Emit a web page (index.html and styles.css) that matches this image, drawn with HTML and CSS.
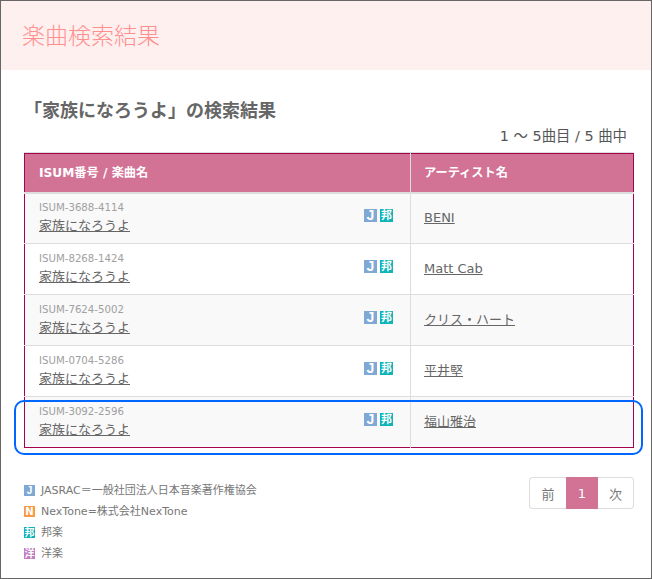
FILE: index.html
```html
<!DOCTYPE html>
<html lang="ja">
  <head>
    <meta charset="UTF-8" />
    <title>楽曲検索結果</title>
    <link rel="stylesheet" href="styles.css">
  </head>
  <body>
    <div class="frame">
      <header class="page-head">
        <h1>楽曲検索結果</h1>
      </header>
      <main class="content">
        <h2>「家族になろうよ」の検索結果</h2>
        <p class="count">1 ～ 5曲目 / 5 曲中</p>
        <div class="table-wrap">
          <table class="songs">
            <thead>
              <tr>
                <th class="col-song">ISUM番号 / 楽曲名</th>
                <th>アーティスト名</th>
              </tr>
            </thead>
            <tbody>
              <tr>
                <td class="col-song">
                  <div class="song-cell">
                    <div>
                      <div class="code">ISUM-3688-4114</div>
                      <a href="#">家族になろうよ</a>
                    </div>
                    <div class="marks"><span class="mark mark-j">J</span><span class="mark mark-ho">邦</span></div>
                  </div>
                </td>
                <td><a href="#">BENI</a></td>
              </tr>
              <tr>
                <td class="col-song">
                  <div class="song-cell">
                    <div>
                      <div class="code">ISUM-8268-1424</div>
                      <a href="#">家族になろうよ</a>
                    </div>
                    <div class="marks"><span class="mark mark-j">J</span><span class="mark mark-ho">邦</span></div>
                  </div>
                </td>
                <td><a href="#">Matt Cab</a></td>
              </tr>
              <tr>
                <td class="col-song">
                  <div class="song-cell">
                    <div>
                      <div class="code">ISUM-7624-5002</div>
                      <a href="#">家族になろうよ</a>
                    </div>
                    <div class="marks"><span class="mark mark-j">J</span><span class="mark mark-ho">邦</span></div>
                  </div>
                </td>
                <td><a href="#">クリス・ハート</a></td>
              </tr>
              <tr>
                <td class="col-song">
                  <div class="song-cell">
                    <div>
                      <div class="code">ISUM-0704-5286</div>
                      <a href="#">家族になろうよ</a>
                    </div>
                    <div class="marks"><span class="mark mark-j">J</span><span class="mark mark-ho">邦</span></div>
                  </div>
                </td>
                <td><a href="#">平井堅</a></td>
              </tr>
              <tr>
                <td class="col-song">
                  <div class="song-cell">
                    <div>
                      <div class="code">ISUM-3092-2596</div>
                      <a href="#">家族になろうよ</a>
                    </div>
                    <div class="marks"><span class="mark mark-j">J</span><span class="mark mark-ho">邦</span></div>
                  </div>
                </td>
                <td><a href="#">福山雅治</a></td>
              </tr>
            </tbody>
          </table>
          <!-- highlight round the last row -->
          <div class="ring"></div>
        </div>
        <div class="foot">
          <ul class="legend">
            <li><span class="mark-small mark-j">J</span>JASRAC＝一般社団法人日本音楽著作権協会</li>
            <li><span class="mark-small mark-n">N</span>NexTone=株式会社NexTone</li>
            <li><span class="mark-small mark-ho">邦</span>邦楽</li>
            <li><span class="mark-small mark-yo">洋</span>洋楽</li>
          </ul>
          <div class="pager">
            <span class="page-item page-prev">前</span>
            <span class="page-item page-on">1</span>
            <span class="page-item page-next">次</span>
          </div>
        </div>
      </main>
    </div>
  </body>
</html>
```

FILE: styles.css
```css
* {
  box-sizing: border-box;
}
html,
body {
  margin: 0;
  height: 100%;
}
body {
  font-family: "DejaVu Sans", "Noto Sans CJK JP", sans-serif;
  color: #666;
  background-color: #fff;
}
.frame {
  height: 579px;
  border: 1px solid #666;
  overflow: hidden;
}
.page-head {
  height: 69px;
  background-color: #fff0f0;
  padding: 0 21px 3px;
  display: flex;
  align-items: center;
}
.page-head h1 {
  margin: 0;
  font-size: 23px;
  font-weight: 300;
  color: #ff8f8f;
  font-family: "Noto Sans CJK JP", sans-serif;
}
.content {
  padding: 26px 17px 0 23px;
}
h2 {
  margin: 0;
  height: 26px;
  line-height: 26px;
  font-size: 18px;
  font-weight: bold;
  color: #666;
  font-family: "Noto Sans CJK JP", sans-serif;
}
.count {
  margin: 5px 7px 0 0;
  height: 25px;
  line-height: 18px;
  font-size: 14.4px;
  text-align: right;
  color: #555;
}
.table-wrap {
  position: relative;
  width: 610px;
  border-top: 1px solid #ddd;
}
.songs {
  width: 610px;
  border-collapse: collapse;
  table-layout: fixed;
  border: 1px solid #a5024f;
  font-size: 14px;
}
.songs th {
  height: 39px;
  padding: 0 0 2px 13px;
  background-color: #d27295;
  color: #fff;
  font-size: 12.2px;
  font-weight: bold;
  text-align: left;
  border-left: 1px solid #ddd;
  border-bottom: 2px solid #ddd;
}
.songs td {
  height: 51px;
  padding: 0 13px;
  border-left: 1px solid #ddd;
  border-bottom: 1px solid #ddd;
  background-color: #fff;
}
.songs tbody tr:nth-child(odd) td {
  background-color: #f9f9f9;
}
.songs tr:last-child td {
  border-bottom: none;
}
.songs .col-song {
  width: 386px;
  border-left: none;
  padding-left: 14px;
  padding-right: 13px;
}
.song-cell {
  display: flex;
  justify-content: space-between;
  align-items: center;
}
.code {
  font-size: 10.2px;
  line-height: 16px;
  color: #a0a0a0;
}
.songs a {
  color: #666;
  font-size: 13px;
  line-height: 20px;
}
.marks {
  display: flex;
  gap: 3px;
  margin-right: 4px;
  margin-bottom: 6px;
}
.mark {
  display: block;
  width: 13px;
  height: 13px;
  line-height: 13px;
  text-align: center;
  font-size: 11px;
  font-weight: bold;
  color: #fff;
}
.mark-j {
  background-color: #7fa9d4;
  font-family: "Liberation Sans", sans-serif;
}
.mark.mark-j {
  font-size: 14px;
}
.mark-ho {
  background-color: #0fb3b8;
}
.mark-n {
  background-color: #f79c45;
}
.mark-yo {
  background-color: #c27fc4;
}
.ring {
  position: absolute;
  left: -10px;
  bottom: -7px;
  width: 629px;
  height: 55px;
  border: 2px solid #0066ff;
  border-radius: 10px;
}
.foot {
  display: flex;
  justify-content: space-between;
  margin-top: 29px;
  width: 610px;
}
.legend {
  list-style: none;
  margin: 3px 0 0;
  padding: 0;
  font-size: 11px;
  color: #777;
}
.legend li {
  height: 21px;
  line-height: 21px;
  display: flex;
  align-items: center;
}
.mark-small {
  display: block;
  width: 11px;
  height: 11px;
  line-height: 11px;
  margin-right: 6px;
  text-align: center;
  font-size: 10px;
  font-weight: bold;
  color: #fff;
}
.pager {
  display: flex;
  height: 32px;
  font-size: 13px;
  color: #777;
}
.page-item {
  display: flex;
  align-items: center;
  justify-content: center;
  border: 1px solid #ddd;
}
.page-prev {
  width: 37px;
  border-radius: 4px 0 0 4px;
  border-right: none;
}
.page-on {
  width: 32px;
  background-color: #d27295;
  border-color: #d27295;
  color: #fff;
}
.page-next {
  width: 36px;
  border-radius: 0 4px 4px 0;
  border-left: none;
}
```
